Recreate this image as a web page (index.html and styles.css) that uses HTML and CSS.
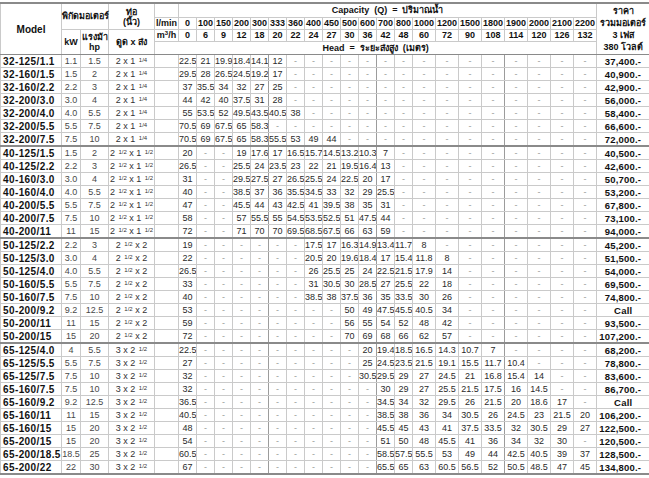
FILE: index.html
```html
<!DOCTYPE html>
<html lang="th">
<head>
<meta charset="utf-8">
<title>Pump price table</title>
<link rel="stylesheet" href="styles.css">
</head>
<body>
<table class="spec">
<colgroup>
<col class="c-model"><col class="c-kw"><col class="c-hp"><col class="c-pipe"><col class="c-unit">
<col class="c3"><col class="c3"><col class="c3"><col class="c3"><col class="c3"><col class="c3"><col class="c3"><col class="c3"><col class="c3"><col class="c3"><col class="c3"><col class="c3"><col class="c3">
<col class="c4"><col class="c4"><col class="c4"><col class="c4"><col class="c4"><col class="c4"><col class="c4"><col class="c4">
<col class="c-price">
</colgroup>
<thead>
<tr class="h1">
<th rowspan="4" class="model-h">Model</th>
<th colspan="2" rowspan="2">พิกัดมอเตอร์</th>
<th rowspan="2" class="pipe-h">ท่อ<br>(นิ้ว)</th>
<th></th>
<th colspan="21">Capacity&nbsp; (Q)&nbsp; =&nbsp; ปริมาณน้ำ</th>
<th rowspan="4" class="price-h">ราคา<br>รวมมอเตอร์<br>3 เฟส<br>380 โวลต์</th>
</tr>
<tr class="h2">
<th class="unit">l/min</th>
<th>0</th><th>100</th><th>150</th><th>200</th><th>300</th><th>333</th><th>360</th><th>400</th><th>450</th><th>500</th><th>600</th><th>700</th><th>800</th><th>1000</th><th>1200</th><th>1500</th><th>1800</th><th>1900</th><th>2000</th><th>2100</th><th>2200</th>
</tr>
<tr class="h3">
<th rowspan="2">kW</th>
<th rowspan="2" class="hp-h">แรงม้า<br>hp</th>
<th rowspan="2">ดูด x ส่ง</th>
<th class="unit">m<sup>3</sup>/h</th>
<th>0</th><th>6</th><th>9</th><th>12</th><th>18</th><th>20</th><th>22</th><th>24</th><th>27</th><th>30</th><th>36</th><th>42</th><th>48</th><th>60</th><th>72</th><th>90</th><th>108</th><th>114</th><th>120</th><th>126</th><th>132</th>
</tr>
<tr class="h4">
<th colspan="22">Head&nbsp; =&nbsp; ระยะส่งสูง&nbsp; (เมตร)</th>
</tr>
</thead>
<tbody>
<tr><td class="m">32-125/1.1</td><td class="k">1.1</td><td class="k">1.5</td><td class="p">2 x 1 <span class="fr">1/4</span></td><td></td><td>22.5</td><td>21</td><td>19.9</td><td>18.4</td><td>14.1</td><td>12</td><td class="d">-</td><td class="d">-</td><td class="d">-</td><td class="d">-</td><td class="d">-</td><td class="d">-</td><td class="d">-</td><td class="d">-</td><td class="d">-</td><td class="d">-</td><td class="d">-</td><td class="d">-</td><td class="d">-</td><td class="d">-</td><td class="d">-</td><td class="pr">37,400.-</td></tr>
<tr><td class="m">32-160/1.5</td><td class="k">1.5</td><td class="k">2</td><td class="p">2 x 1 <span class="fr">1/4</span></td><td></td><td>29.5</td><td>28</td><td>26.5</td><td>24.5</td><td>19.2</td><td>17</td><td class="d">-</td><td class="d">-</td><td class="d">-</td><td class="d">-</td><td class="d">-</td><td class="d">-</td><td class="d">-</td><td class="d">-</td><td class="d">-</td><td class="d">-</td><td class="d">-</td><td class="d">-</td><td class="d">-</td><td class="d">-</td><td class="d">-</td><td class="pr">40,900.-</td></tr>
<tr><td class="m">32-160/2.2</td><td class="k">2.2</td><td class="k">3</td><td class="p">2 x 1 <span class="fr">1/4</span></td><td></td><td>37</td><td>35.5</td><td>34</td><td>32</td><td>27</td><td>25</td><td class="d">-</td><td class="d">-</td><td class="d">-</td><td class="d">-</td><td class="d">-</td><td class="d">-</td><td class="d">-</td><td class="d">-</td><td class="d">-</td><td class="d">-</td><td class="d">-</td><td class="d">-</td><td class="d">-</td><td class="d">-</td><td class="d">-</td><td class="pr">42,900.-</td></tr>
<tr><td class="m">32-200/3.0</td><td class="k">3.0</td><td class="k">4</td><td class="p">2 x 1 <span class="fr">1/4</span></td><td></td><td>44</td><td>42</td><td>40</td><td>37.5</td><td>31</td><td>28</td><td class="d">-</td><td class="d">-</td><td class="d">-</td><td class="d">-</td><td class="d">-</td><td class="d">-</td><td class="d">-</td><td class="d">-</td><td class="d">-</td><td class="d">-</td><td class="d">-</td><td class="d">-</td><td class="d">-</td><td class="d">-</td><td class="d">-</td><td class="pr">56,000.-</td></tr>
<tr><td class="m">32-200/4.0</td><td class="k">4.0</td><td class="k">5.5</td><td class="p">2 x 1 <span class="fr">1/4</span></td><td></td><td>55</td><td>53.5</td><td>52</td><td>49.5</td><td>43.5</td><td>40.5</td><td>38</td><td class="d">-</td><td class="d">-</td><td class="d">-</td><td class="d">-</td><td class="d">-</td><td class="d">-</td><td class="d">-</td><td class="d">-</td><td class="d">-</td><td class="d">-</td><td class="d">-</td><td class="d">-</td><td class="d">-</td><td class="d">-</td><td class="pr">58,400.-</td></tr>
<tr><td class="m">32-200/5.5</td><td class="k">5.5</td><td class="k">7.5</td><td class="p">2 x 1 <span class="fr">1/4</span></td><td></td><td>70.5</td><td>69</td><td>67.5</td><td>65</td><td>58.3</td><td class="d">-</td><td class="d">-</td><td class="d">-</td><td class="d">-</td><td class="d">-</td><td class="d">-</td><td class="d">-</td><td class="d">-</td><td class="d">-</td><td class="d">-</td><td class="d">-</td><td class="d">-</td><td class="d">-</td><td class="d">-</td><td class="d">-</td><td class="d">-</td><td class="pr">66,600.-</td></tr>
<tr><td class="m">32-200/7.5</td><td class="k">7.5</td><td class="k">10</td><td class="p">2 x 1 <span class="fr">1/4</span></td><td></td><td>70.5</td><td>69</td><td>67.5</td><td>65</td><td>58.3</td><td>55.5</td><td>53</td><td>49</td><td>44</td><td class="d">-</td><td class="d">-</td><td class="d">-</td><td class="d">-</td><td class="d">-</td><td class="d">-</td><td class="d">-</td><td class="d">-</td><td class="d">-</td><td class="d">-</td><td class="d">-</td><td class="d">-</td><td class="pr">72,000.-</td></tr>

<tr class="g"><td class="m">40-125/1.5</td><td class="k">1.5</td><td class="k">2</td><td class="p">2 <span class="fr">1/2</span> x 1 <span class="fr">1/2</span></td><td></td><td>20</td><td class="d">-</td><td class="d">-</td><td>19</td><td>17.6</td><td>17</td><td>16.5</td><td>15.7</td><td>14.5</td><td>13.2</td><td>10.3</td><td>7</td><td class="d">-</td><td class="d">-</td><td class="d">-</td><td class="d">-</td><td class="d">-</td><td class="d">-</td><td class="d">-</td><td class="d">-</td><td class="d">-</td><td class="pr">40,500.-</td></tr>
<tr><td class="m">40-125/2.2</td><td class="k">2.2</td><td class="k">3</td><td class="p">2 <span class="fr">1/2</span> x 1 <span class="fr">1/2</span></td><td></td><td>26.5</td><td class="d">-</td><td class="d">-</td><td>25.5</td><td>24</td><td>23.5</td><td>23</td><td>22</td><td>21</td><td>19.5</td><td>16.4</td><td>13</td><td class="d">-</td><td class="d">-</td><td class="d">-</td><td class="d">-</td><td class="d">-</td><td class="d">-</td><td class="d">-</td><td class="d">-</td><td class="d">-</td><td class="pr">42,600.-</td></tr>
<tr><td class="m">40-160/3.0</td><td class="k">3.0</td><td class="k">4</td><td class="p">2 <span class="fr">1/2</span> x 1 <span class="fr">1/2</span></td><td></td><td>31</td><td class="d">-</td><td class="d">-</td><td>29.5</td><td>27.5</td><td>27</td><td>26.5</td><td>25.5</td><td>24</td><td>22.5</td><td>20</td><td>17</td><td class="d">-</td><td class="d">-</td><td class="d">-</td><td class="d">-</td><td class="d">-</td><td class="d">-</td><td class="d">-</td><td class="d">-</td><td class="d">-</td><td class="pr">50,700.-</td></tr>
<tr><td class="m">40-160/4.0</td><td class="k">4.0</td><td class="k">5.5</td><td class="p">2 <span class="fr">1/2</span> x 1 <span class="fr">1/2</span></td><td></td><td>40</td><td class="d">-</td><td class="d">-</td><td>38.5</td><td>37</td><td>36</td><td>35.5</td><td>34.5</td><td>33</td><td>32</td><td>29</td><td>25.5</td><td class="d">-</td><td class="d">-</td><td class="d">-</td><td class="d">-</td><td class="d">-</td><td class="d">-</td><td class="d">-</td><td class="d">-</td><td class="d">-</td><td class="pr">53,200.-</td></tr>
<tr><td class="m">40-200/5.5</td><td class="k">5.5</td><td class="k">7.5</td><td class="p">2 <span class="fr">1/2</span> x 1 <span class="fr">1/2</span></td><td></td><td>47</td><td class="d">-</td><td class="d">-</td><td>45.5</td><td>44</td><td>43</td><td>42.5</td><td>41</td><td>39.5</td><td>38</td><td>35</td><td>31</td><td class="d">-</td><td class="d">-</td><td class="d">-</td><td class="d">-</td><td class="d">-</td><td class="d">-</td><td class="d">-</td><td class="d">-</td><td class="d">-</td><td class="pr">67,800.-</td></tr>
<tr><td class="m">40-200/7.5</td><td class="k">7.5</td><td class="k">10</td><td class="p">2 <span class="fr">1/2</span> x 1 <span class="fr">1/2</span></td><td></td><td>58</td><td class="d">-</td><td class="d">-</td><td>57</td><td>55.5</td><td>55</td><td>54.5</td><td>53.5</td><td>52.5</td><td>51</td><td>47.5</td><td>44</td><td class="d">-</td><td class="d">-</td><td class="d">-</td><td class="d">-</td><td class="d">-</td><td class="d">-</td><td class="d">-</td><td class="d">-</td><td class="d">-</td><td class="pr">73,100.-</td></tr>
<tr><td class="m">40-200/11</td><td class="k">11</td><td class="k">15</td><td class="p">2 <span class="fr">1/2</span> x 1 <span class="fr">1/2</span></td><td></td><td>72</td><td class="d">-</td><td class="d">-</td><td>71</td><td>70</td><td>70</td><td>69.5</td><td>68.5</td><td>67.5</td><td>66</td><td>63</td><td>59</td><td class="d">-</td><td class="d">-</td><td class="d">-</td><td class="d">-</td><td class="d">-</td><td class="d">-</td><td class="d">-</td><td class="d">-</td><td class="d">-</td><td class="pr">94,000.-</td></tr>

<tr class="g"><td class="m">50-125/2.2</td><td class="k">2.2</td><td class="k">3</td><td class="p">2 <span class="fr">1/2</span> x 2</td><td></td><td>19</td><td class="d">-</td><td class="d">-</td><td class="d">-</td><td class="d">-</td><td class="d">-</td><td class="d">-</td><td>17.5</td><td>17</td><td>16.3</td><td>14.9</td><td>13.4</td><td>11.7</td><td>8</td><td class="d">-</td><td class="d">-</td><td class="d">-</td><td class="d">-</td><td class="d">-</td><td class="d">-</td><td class="d">-</td><td class="pr">45,200.-</td></tr>
<tr><td class="m">50-125/3.0</td><td class="k">3.0</td><td class="k">4</td><td class="p">2 <span class="fr">1/2</span> x 2</td><td></td><td>22</td><td class="d">-</td><td class="d">-</td><td class="d">-</td><td class="d">-</td><td class="d">-</td><td class="d">-</td><td>20.5</td><td>20</td><td>19.6</td><td>18.4</td><td>17</td><td>15.4</td><td>11.8</td><td>8</td><td class="d">-</td><td class="d">-</td><td class="d">-</td><td class="d">-</td><td class="d">-</td><td class="d">-</td><td class="pr">51,500.-</td></tr>
<tr><td class="m">50-125/4.0</td><td class="k">4.0</td><td class="k">5.5</td><td class="p">2 <span class="fr">1/2</span> x 2</td><td></td><td>26.5</td><td class="d">-</td><td class="d">-</td><td class="d">-</td><td class="d">-</td><td class="d">-</td><td class="d">-</td><td>26</td><td>25.5</td><td>25</td><td>24</td><td>22.5</td><td>21.5</td><td>17.9</td><td>14</td><td class="d">-</td><td class="d">-</td><td class="d">-</td><td class="d">-</td><td class="d">-</td><td class="d">-</td><td class="pr">54,000.-</td></tr>
<tr><td class="m">50-160/5.5</td><td class="k">5.5</td><td class="k">7.5</td><td class="p">2 <span class="fr">1/2</span> x 2</td><td></td><td>33</td><td class="d">-</td><td class="d">-</td><td class="d">-</td><td class="d">-</td><td class="d">-</td><td class="d">-</td><td>31</td><td>30.5</td><td>30</td><td>28.5</td><td>27</td><td>25.5</td><td>22</td><td>18</td><td class="d">-</td><td class="d">-</td><td class="d">-</td><td class="d">-</td><td class="d">-</td><td class="d">-</td><td class="pr">69,500.-</td></tr>
<tr><td class="m">50-160/7.5</td><td class="k">7.5</td><td class="k">10</td><td class="p">2 <span class="fr">1/2</span> x 2</td><td></td><td>40</td><td class="d">-</td><td class="d">-</td><td class="d">-</td><td class="d">-</td><td class="d">-</td><td class="d">-</td><td>38.5</td><td>38</td><td>37.5</td><td>36</td><td>35</td><td>33.5</td><td>30</td><td>26</td><td class="d">-</td><td class="d">-</td><td class="d">-</td><td class="d">-</td><td class="d">-</td><td class="d">-</td><td class="pr">74,800.-</td></tr>
<tr><td class="m">50-200/9.2</td><td class="k">9.2</td><td class="k">12.5</td><td class="p">2 <span class="fr">1/2</span> x 2</td><td></td><td>53</td><td class="d">-</td><td class="d">-</td><td class="d">-</td><td class="d">-</td><td class="d">-</td><td class="d">-</td><td class="d">-</td><td class="d">-</td><td>50</td><td>49</td><td>47.5</td><td>45.5</td><td>40.5</td><td>34</td><td class="d">-</td><td class="d">-</td><td class="d">-</td><td class="d">-</td><td class="d">-</td><td class="d">-</td><td class="pr call">Call</td></tr>
<tr><td class="m">50-200/11</td><td class="k">11</td><td class="k">15</td><td class="p">2 <span class="fr">1/2</span> x 2</td><td></td><td>59</td><td class="d">-</td><td class="d">-</td><td class="d">-</td><td class="d">-</td><td class="d">-</td><td class="d">-</td><td class="d">-</td><td class="d">-</td><td>56</td><td>55</td><td>54</td><td>52</td><td>48</td><td>42</td><td class="d">-</td><td class="d">-</td><td class="d">-</td><td class="d">-</td><td class="d">-</td><td class="d">-</td><td class="pr">93,500.-</td></tr>
<tr><td class="m">50-200/15</td><td class="k">15</td><td class="k">20</td><td class="p">2 <span class="fr">1/2</span> x 2</td><td></td><td>72</td><td class="d">-</td><td class="d">-</td><td class="d">-</td><td class="d">-</td><td class="d">-</td><td class="d">-</td><td class="d">-</td><td class="d">-</td><td>70</td><td>69</td><td>68</td><td>66</td><td>62</td><td>57</td><td class="d">-</td><td class="d">-</td><td class="d">-</td><td class="d">-</td><td class="d">-</td><td class="d">-</td><td class="pr">107,200.-</td></tr>

<tr class="g"><td class="m">65-125/4.0</td><td class="k">4</td><td class="k">5.5</td><td class="p">3 x 2 <span class="fr">1/2</span></td><td></td><td>22.5</td><td class="d">-</td><td class="d">-</td><td class="d">-</td><td class="d">-</td><td class="d">-</td><td class="d">-</td><td class="d">-</td><td class="d">-</td><td class="d">-</td><td>20</td><td>19.4</td><td>18.5</td><td>16.5</td><td>14.3</td><td>10.7</td><td>7</td><td class="d">-</td><td class="d">-</td><td class="d">-</td><td class="d">-</td><td class="pr">68,200.-</td></tr>
<tr><td class="m">65-125/5.5</td><td class="k">5.5</td><td class="k">7.5</td><td class="p">3 x 2 <span class="fr">1/2</span></td><td></td><td>27</td><td class="d">-</td><td class="d">-</td><td class="d">-</td><td class="d">-</td><td class="d">-</td><td class="d">-</td><td class="d">-</td><td class="d">-</td><td class="d">-</td><td>25</td><td>24.5</td><td>23.5</td><td>21.5</td><td>19.1</td><td>15.5</td><td>11.7</td><td>10.4</td><td class="d">-</td><td class="d">-</td><td class="d">-</td><td class="pr">78,800.-</td></tr>
<tr><td class="m">65-125/7.5</td><td class="k">7.5</td><td class="k">10</td><td class="p">3 x 2 <span class="fr">1/2</span></td><td></td><td>32</td><td class="d">-</td><td class="d">-</td><td class="d">-</td><td class="d">-</td><td class="d">-</td><td class="d">-</td><td class="d">-</td><td class="d">-</td><td class="d">-</td><td>30.5</td><td>29.5</td><td>29</td><td>27</td><td>24.5</td><td>21</td><td>16.8</td><td>15.4</td><td>14</td><td class="d">-</td><td class="d">-</td><td class="pr">83,600.-</td></tr>
<tr><td class="m">65-160/7.5</td><td class="k">7.5</td><td class="k">10</td><td class="p">3 x 2 <span class="fr">1/2</span></td><td></td><td>32</td><td class="d">-</td><td class="d">-</td><td class="d">-</td><td class="d">-</td><td class="d">-</td><td class="d">-</td><td class="d">-</td><td class="d">-</td><td class="d">-</td><td class="d">-</td><td>30</td><td>29</td><td>27</td><td>25.5</td><td>21.5</td><td>17.5</td><td>16</td><td>14.5</td><td class="d">-</td><td class="d">-</td><td class="pr">86,700.-</td></tr>
<tr><td class="m">65-160/9.2</td><td class="k">9.2</td><td class="k">12.5</td><td class="p">3 x 2 <span class="fr">1/2</span></td><td></td><td>36.5</td><td class="d">-</td><td class="d">-</td><td class="d">-</td><td class="d">-</td><td class="d">-</td><td class="d">-</td><td class="d">-</td><td class="d">-</td><td class="d">-</td><td class="d">-</td><td>34.5</td><td>34</td><td>32</td><td>29.5</td><td>26</td><td>21.5</td><td>20</td><td>18.6</td><td>17</td><td class="d">-</td><td class="pr call">Call</td></tr>
<tr><td class="m">65-160/11</td><td class="k">11</td><td class="k">15</td><td class="p">3 x 2 <span class="fr">1/2</span></td><td></td><td>40.5</td><td class="d">-</td><td class="d">-</td><td class="d">-</td><td class="d">-</td><td class="d">-</td><td class="d">-</td><td class="d">-</td><td class="d">-</td><td class="d">-</td><td class="d">-</td><td>38.5</td><td>38</td><td>36</td><td>34</td><td>30.5</td><td>26</td><td>24.5</td><td>23</td><td>21.5</td><td>20</td><td class="pr">106,200.-</td></tr>
<tr><td class="m">65-160/15</td><td class="k">15</td><td class="k">20</td><td class="p">3 x 2 <span class="fr">1/2</span></td><td></td><td>48</td><td class="d">-</td><td class="d">-</td><td class="d">-</td><td class="d">-</td><td class="d">-</td><td class="d">-</td><td class="d">-</td><td class="d">-</td><td class="d">-</td><td class="d">-</td><td>45.5</td><td>45</td><td>43</td><td>41</td><td>37.5</td><td>33.5</td><td>32</td><td>30.5</td><td>29</td><td>27</td><td class="pr">122,500.-</td></tr>
<tr><td class="m">65-200/15</td><td class="k">15</td><td class="k">20</td><td class="p">3 x 2 <span class="fr">1/2</span></td><td></td><td>54</td><td class="d">-</td><td class="d">-</td><td class="d">-</td><td class="d">-</td><td class="d">-</td><td class="d">-</td><td class="d">-</td><td class="d">-</td><td class="d">-</td><td class="d">-</td><td>51</td><td>50</td><td>48</td><td>45.5</td><td>41</td><td>36</td><td>34</td><td>32</td><td>30</td><td class="d">-</td><td class="pr">120,500.-</td></tr>
<tr><td class="m">65-200/18.5</td><td class="k">18.5</td><td class="k">25</td><td class="p">3 x 2 <span class="fr">1/2</span></td><td></td><td>60.5</td><td class="d">-</td><td class="d">-</td><td class="d">-</td><td class="d">-</td><td class="d">-</td><td class="d">-</td><td class="d">-</td><td class="d">-</td><td class="d">-</td><td class="d">-</td><td>58.5</td><td>57.5</td><td>55.5</td><td>53</td><td>49</td><td>44</td><td>42.5</td><td>40.5</td><td>39</td><td>37</td><td class="pr">128,500.-</td></tr>
<tr class="last"><td class="m">65-200/22</td><td class="k">22</td><td class="k">30</td><td class="p">3 x 2 <span class="fr">1/2</span></td><td></td><td>67</td><td class="d">-</td><td class="d">-</td><td class="d">-</td><td class="d">-</td><td class="d">-</td><td class="d">-</td><td class="d">-</td><td class="d">-</td><td class="d">-</td><td class="d">-</td><td>65.5</td><td>65</td><td>63</td><td>60.5</td><td>56.5</td><td>52</td><td>50.5</td><td>48.5</td><td>47</td><td>45</td><td class="pr">134,800.-</td></tr>
</tbody>
</table>
</body>
</html>
```

FILE: styles.css
```css
html, body {
  margin: 0;
  padding: 0;
  background: #ffffff;
}

body {
  font-family: "Liberation Sans", Arial, sans-serif;
  color: #1a1a1a;
}

.spec {
  border-collapse: collapse;
  table-layout: fixed;
  width: 649px;
  margin-top: 2px;
  font-size: 9px;
  line-height: 11px;
}

.c-model { width: 61px; }
.c-kw { width: 19px; }
.c-hp { width: 28px; }
.c-pipe { width: 46px; }
.c-unit { width: 24px; }
.c3 { width: 18px; }
.c4 { width: 23px; }
.c-price { width: 53px; }

.spec th,
.spec td {
  padding: 0;
  border: 1px solid #cacaca;
  text-align: center;
  vertical-align: middle;
  white-space: nowrap;
  overflow: hidden;
}

.spec th {
  font-weight: bold;
  color: #111;
  overflow: visible;
}

.spec thead tr:first-child th {
  border-top: 2px solid #8a8a8a;
}

.h1 th { height: 13px; }
.h2 th { height: 11px; }
.h3 th { height: 11px; }
.h4 th { height: 12px; }

.model-h { font-size: 10px; }

.pipe-h { line-height: 10px; padding-top: 1px; }
.hp-h { line-height: 10px; }

.unit { text-align: left; padding-left: 2px; }

.unit sup {
  font-size: 6px;
  line-height: 0;
  vertical-align: 3px;
}

.price-h { line-height: 12px; }

.spec thead tr.h4 th,
.spec thead .model-h,
.spec thead .price-h,
.spec thead tr.h3 th[rowspan] {
  border-bottom: 1px solid #8a8a8a;
}

.spec tbody td {
  height: 12px;
  color: #2a2a2a;
}

.spec tbody td:nth-child(10),
.spec tbody td:nth-child(16),
.spec tbody td:nth-child(22) {
  border-right: 1px solid #9c9c9c;
}

.spec tbody tr.g td {
  border-top: 2px solid #8a8a8a;
}

.spec tbody tr.last td {
  border-bottom: 2px solid #8a8a8a;
}

.m {
  font-weight: bold;
  text-align: left !important;
  padding-left: 2px !important;
  color: #111 !important;
  font-size: 10px;
  letter-spacing: 0.4px;
}

.k { color: #484848 !important; }

.p { color: #333 !important; }

.fr {
  font-size: 6px;
  line-height: 0;
  vertical-align: 2px;
  margin-left: 1px;
}

.d { color: #9a9a9a !important; }

.pr {
  font-weight: bold;
  text-align: right !important;
  padding-right: 8px !important;
  color: #111 !important;
  font-size: 9.5px;
  letter-spacing: 0.2px;
}

.pr.call {
  text-align: center !important;
  padding-right: 0 !important;
}
```
